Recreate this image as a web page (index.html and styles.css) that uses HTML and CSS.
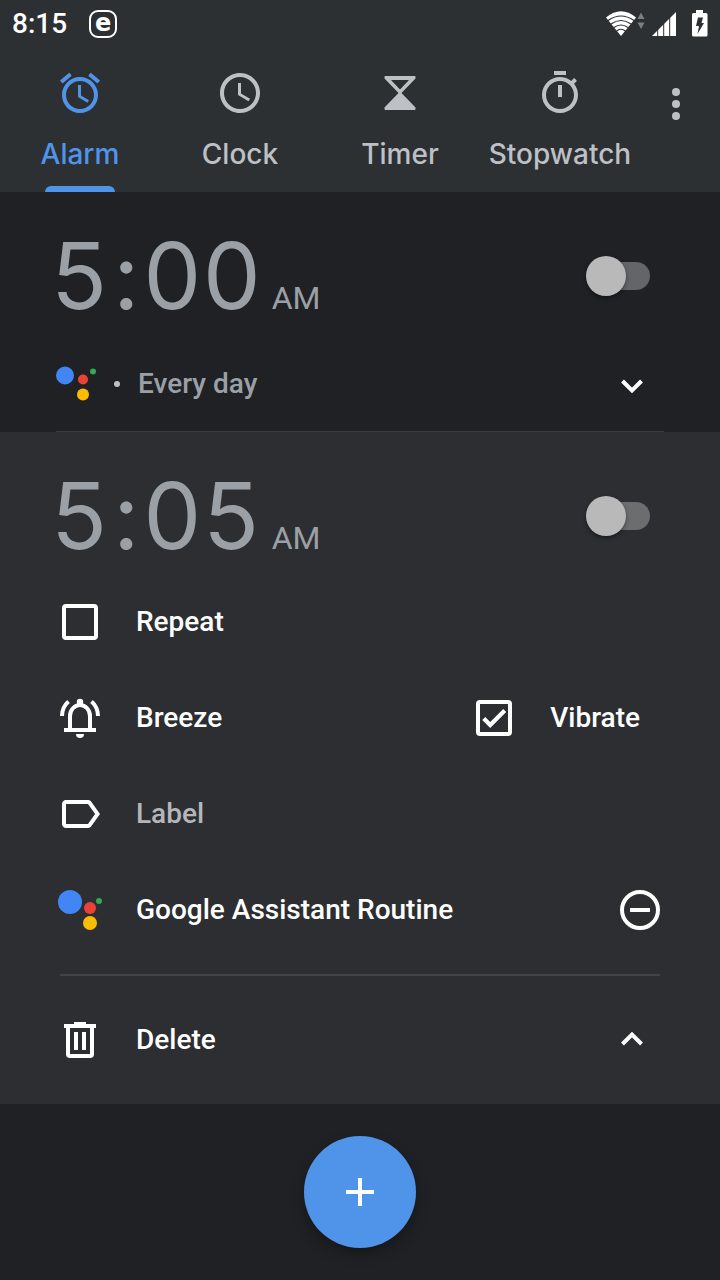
FILE: index.html
```html
<!DOCTYPE html>
<html lang="en">
<head>
<meta charset="utf-8">
<meta name="viewport" content="width=device-width, initial-scale=1">
<title>Clock</title>
<link rel="stylesheet" href="styles.css">
</head>
<body>
<div class="app">
  <header class="header">
    <div class="status">
      <span class="status-time">8:15</span>
      <span class="status-badge">e</span>
      <svg class="status-icons" width="102" height="28" viewBox="0 0 102 28" aria-hidden="true">
        <g fill="#fff">
          <path d="M0 7.500Q15-5 30 7.500L15 26Z"/>
        </g>
        <g fill="none" stroke="#2d3033" stroke-width="1.200">
          <path d="M2 10.500Q15 1.500 28 10.500M5 14Q15 7 25 14M8 17.500Q15 12.500 22 17.500M10.500 21Q15 17.500 19.500 21"/>
        </g>
        <path fill="#7b7e80" d="M35 2.500l3.500 6.500h-7zM35 19l3.500-6.500h-7z"/>
        <path fill="#fff" d="M46 26L70 2v24z"/>
        <path stroke="#2d3033" stroke-width="1" d="M51.700 0v28M57.700 0v28M63.700 0v28"/>
        <path fill="#fff" d="M90 0h7v3h3q1.500 0 1.500 1.500v20.500q0 1.500-1.500 1.500h-12.500q-1.500 0-1.500-1.500v-20.500q0-1.500 1.500-1.500h2.500z"/>
        <path fill="#2d3033" d="M92 7.500h5l-1.500 5.500h2.500l-6.500 11 1.500-8h-3z"/>
      </svg>
    </div>
    <nav class="nav">
      <button class="tab tab-active" type="button">
        <svg class="icon" viewBox="0 0 24 24" aria-hidden="true"><path d="M22 5.720l-4.600-3.860-1.290 1.530 4.600 3.860L22 5.720zM7.880 3.390L6.600 1.860 2 5.710l1.290 1.530 4.590-3.850zM12.500 8H11v6l4.750 2.850.75-1.230-4-2.370V8zM12 4c-4.970 0-9 4.030-9 9s4.020 9 9 9c4.970 0 9-4.030 9-9s-4.030-9-9-9zm0 16c-3.870 0-7-3.130-7-7s3.130-7 7-7 7 3.130 7 7-3.130 7-7 7z"/></svg>
        <span>Alarm</span>
      </button>
      <button class="tab" type="button">
        <svg class="icon" viewBox="0 0 24 24" aria-hidden="true"><path d="M11.990 2C6.470 2 2 6.480 2 12s4.470 10 9.990 10C17.520 22 22 17.520 22 12S17.520 2 11.990 2zM12 20c-4.420 0-8-3.580-8-8s3.580-8 8-8 8 3.580 8 8-3.580 8-8 8zM12.500 7H11v6l5.250 3.150.75-1.230-4.500-2.670z"/></svg>
        <span>Clock</span>
      </button>
      <button class="tab" type="button">
        <svg class="icon" viewBox="0 0 48 48" aria-hidden="true"><path fill-rule="evenodd" d="M9.500 7h29q1 0 1 1v1.500L25.500 24l14 14.500V40q0 1-1 1h-29q-1 0-1-1v-1.500L22.500 24l-14-14.500V8q0-1 1-1zM15 11l9 9.500L33 11z"/></svg>
        <span>Timer</span>
      </button>
      <button class="tab" type="button">
        <svg class="icon" viewBox="0 0 24 24" aria-hidden="true"><path d="M15 1H9v2h6V1zm-4 13h2V8h-2v6zm8.030-6.610l1.420-1.420c-.43-.51-.9-.99-1.410-1.410l-1.420 1.420C16.070 4.740 14.120 4 12 4c-4.970 0-9 4.030-9 9s4.020 9 9 9 9-4.030 9-9c0-2.120-.74-4.070-1.970-5.610zM12 20c-3.870 0-7-3.130-7-7s3.130-7 7-7 7 3.130 7 7-3.130 7-7 7z"/></svg>
        <span>Stopwatch</span>
      </button>
      <button class="overflow" type="button" aria-label="More options">
        <svg class="icon" viewBox="0 0 24 24" aria-hidden="true"><circle cx="12" cy="6" r="2"/><circle cx="12" cy="12" r="2"/><circle cx="12" cy="18" r="2"/></svg>
      </button>
    </nav>
  </header>

  <main class="alarms">
    <section class="alarm">
      <div class="time-row">
        <button class="time" type="button"><span class="digits"><span>5</span><span>:</span><span>00</span></span><span class="period">AM</span></button>
        <input class="switch" type="checkbox" aria-label="5:00 AM alarm">
      </div>
      <div class="summary">
        <svg class="assistant-small" width="40" height="48" viewBox="0 0 40 48" aria-hidden="true"><circle cx="9" cy="15.500" r="9" fill="#4285f4"/><circle cx="27" cy="19.500" r="5" fill="#ea4335"/><circle cx="27" cy="34.500" r="6" fill="#fbbc05"/><circle cx="37" cy="11.500" r="3" fill="#34a853"/></svg>
        <span class="dot"></span>
        <span class="days">Every day</span>
        <button class="chevron" type="button" aria-label="Expand alarm">
          <svg class="icon" viewBox="0 0 48 48" aria-hidden="true"><path class="line" d="M14.500 21l9.500 9.500 9.500-9.500"/></svg>
        </button>
      </div>
    </section>

    <section class="alarm alarm-open">
      <div class="time-row">
        <button class="time" type="button"><span class="digits"><span>5</span><span>:</span><span>05</span></span><span class="period">AM</span></button>
        <input class="switch" type="checkbox" aria-label="5:05 AM alarm">
      </div>
      <div class="row">
        <label class="item"><span class="box"><input class="check" type="checkbox"></span>Repeat</label>
      </div>
      <div class="row">
        <button class="item" type="button">
          <svg class="icon" viewBox="0 0 48 48" aria-hidden="true"><path class="line" d="M14 36V22a10 11 0 0 1 20 0v14M8 36h32M6 22C6 16 8.500 11 12.500 7.500M42 22C42 16 39.500 11 35.500 7.500"/><circle cx="24" cy="8" r="3.200"/><path d="M20 40h8a4 4 0 0 1-8 0z"/></svg>
          Breeze
        </button>
        <label class="item vibrate"><span class="box"><input class="check" type="checkbox" checked></span>Vibrate</label>
      </div>
      <div class="row">
        <button class="item item-muted" type="button">
          <svg class="icon icon-white" viewBox="0 0 24 24" aria-hidden="true"><path d="M17.630 5.840C17.270 5.330 16.670 5 16 5L5 5.010C3.900 5.010 3 5.900 3 7v10c0 1.100.9 1.990 2 1.990L16 19c.67 0 1.270-.33 1.630-.84L22 12l-4.370-6.160zM16 17H5V7h11l3.550 5L16 17z"/></svg>
          Label
        </button>
      </div>
      <div class="row">
        <button class="item" type="button">
          <svg class="icon" viewBox="0 0 48 48" aria-hidden="true"><circle cx="14" cy="16" r="12" fill="#4285f4"/><circle cx="34" cy="22" r="6" fill="#ea4335"/><circle cx="34" cy="37" r="7" fill="#fbbc05"/><circle cx="43" cy="15" r="3" fill="#34a853"/></svg>
          Google Assistant Routine
        </button>
        <button class="remove" type="button" aria-label="Remove routine">
          <svg class="icon" viewBox="0 0 48 48" aria-hidden="true"><circle class="line" cx="24" cy="24" r="18"/><path class="line" d="M14 24h20"/></svg>
        </button>
      </div>
      <div class="row row-delete">
        <button class="item" type="button">
          <svg class="icon" viewBox="0 0 48 48" aria-hidden="true"><path d="M18 6h12v2h10v4H8V8h10zM18 16h4v18h-4zM26 16h4v18h-4z"/><path class="line" d="M12 11v27q0 2 2 2h20q2 0 2-2V11"/></svg>
          Delete
        </button>
        <button class="chevron" type="button" aria-label="Collapse alarm">
          <svg class="icon" viewBox="0 0 48 48" aria-hidden="true"><path class="line" d="M14.500 28l9.500-9.500 9.500 9.500"/></svg>
        </button>
      </div>
    </section>
  </main>

  <footer class="footer">
    <button class="fab" type="button" aria-label="Add alarm">
      <svg class="icon" viewBox="0 0 48 48" aria-hidden="true"><path class="line" d="M24 10v28M10 24h28"/></svg>
    </button>
  </footer>
</div>
</body>
</html>
```
FILE: styles.css
```css
* {
  box-sizing: border-box;
}

body {
  margin: 0;
  background: #202124;
  color: #fff;
  font: 500 28px/34px Roboto, sans-serif;
}

button {
  margin: 0;
  padding: 0;
  border: 0;
  background: none;
  color: inherit;
  font: inherit;
  text-align: left;
}

.app {
  display: flex;
  flex-direction: column;
  min-height: 100vh;
}

.icon {
  display: block;
  flex: none;
  width: 48px;
  height: 48px;
  fill: currentColor;
}

.icon-white {
  color: #fff;
}

.line {
  fill: none;
  stroke: currentColor;
  stroke-width: 4;
}

/* Header */
.header {
  background: #2d3033;
}

.status {
  display: flex;
  align-items: center;
  height: 48px;
  padding: 0 12px;
}

.status-badge {
  width: 28px;
  height: 28px;
  margin-left: 22px;
  border: 2px solid #fff;
  border-radius: 9px;
  font: 700 24px/22px "DejaVu Sans", sans-serif;
  text-align: center;
}

.status-icons {
  margin-left: auto;
}

.nav {
  display: flex;
  height: 144px;
  padding-right: 8px;
  color: #bdc1c6;
}

.tab {
  position: relative;
  display: flex;
  flex: 1;
  flex-direction: column;
  align-items: center;
  gap: 20px;
  padding-top: 21px;
  font-family: Inter, sans-serif;
}

.tab-active {
  color: #5094e9;
}

.tab-active::after {
  content: "";
  position: absolute;
  bottom: 0;
  width: 70px;
  height: 6px;
  border-radius: 6px 6px 0 0;
  background: #5094e9;
}

.overflow {
  display: flex;
  justify-content: center;
  width: 72px;
  padding-top: 32px;
}

/* Alarm cards */
.alarm {
  padding-top: 36px;
}

.alarm-open {
  background: #2d2e31;
}

.time-row {
  display: flex;
  align-items: center;
  justify-content: space-between;
  height: 96px;
  margin-bottom: 12px;
  padding: 0 70px 0 50px;
}

.alarm-open .time-row {
  margin-bottom: 10px;
}

.time {
  display: flex;
  align-items: baseline;
  gap: 10px;
  color: #9aa0a6;
  font-weight: 400;
}

.digits {
  display: flex;
  gap: 4px;
  font: 400 92px/98px Inter, sans-serif;
  font-variant-numeric: tabular-nums;
}

.period {
  font-size: 32px;
}

.switch {
  position: relative;
  width: 64px;
  height: 40px;
  margin: 0;
  appearance: none;
}

.switch::before {
  content: "";
  position: absolute;
  inset: 6px 0 6px 8px;
  border-radius: 14px;
  background: #646568;
}

.switch::after {
  content: "";
  position: absolute;
  inset: 0 auto 0 0;
  width: 40px;
  border-radius: 50%;
  background: #b9b9b9;
  box-shadow: 0 2px 4px rgba(0, 0, 0, 0.4);
}

.alarm-open .switch::before {
  background: #6c6d6f;
}

.summary {
  display: flex;
  align-items: center;
  height: 96px;
  margin: 0 56px;
  border-bottom: 1px solid #3a3b3e;
  color: #9aa0a6;
}

.dot {
  width: 6px;
  height: 6px;
  margin: 0 18px;
  border-radius: 50%;
  background: #bdc1c6;
}

.chevron {
  display: flex;
  justify-content: center;
  width: 64px;
  margin-left: auto;
  color: #fff;
}

.row {
  display: flex;
  align-items: center;
  justify-content: space-between;
  height: 96px;
  margin: 0 56px;
}

.item {
  display: flex;
  align-items: center;
  gap: 32px;
  line-height: 36px;
}

.item-muted {
  color: #b5b6b9;
}

.vibrate {
  padding-right: 24px;
}

.box {
  display: flex;
  padding: 6px;
}

.check {
  width: 36px;
  height: 36px;
  margin: 0;
  border: 4px solid #fff;
  border-radius: 4px;
  appearance: none;
}

.check:checked::after {
  content: "";
  display: block;
  height: 28px;
  background: #fff;
  clip-path: polygon(2px 16px, 5px 13px, 10px 18px, 23px 5px, 26px 8px, 10px 24px);
}

.row-delete {
  height: 130px;
  margin: 16px 60px 0;
  border-top: 2px solid #434447;
}

.row-delete .item {
  margin-left: -4px;
}

.row-delete .chevron {
  margin-right: -4px;
}

/* Floating action button */
.footer {
  display: flex;
  justify-content: center;
  padding: 32px;
}

.fab {
  display: flex;
  align-items: center;
  justify-content: center;
  width: 112px;
  height: 112px;
  border-radius: 50%;
  background: #5094e9;
  box-shadow: 0 6px 14px rgba(0, 0, 0, 0.3);
}
```
